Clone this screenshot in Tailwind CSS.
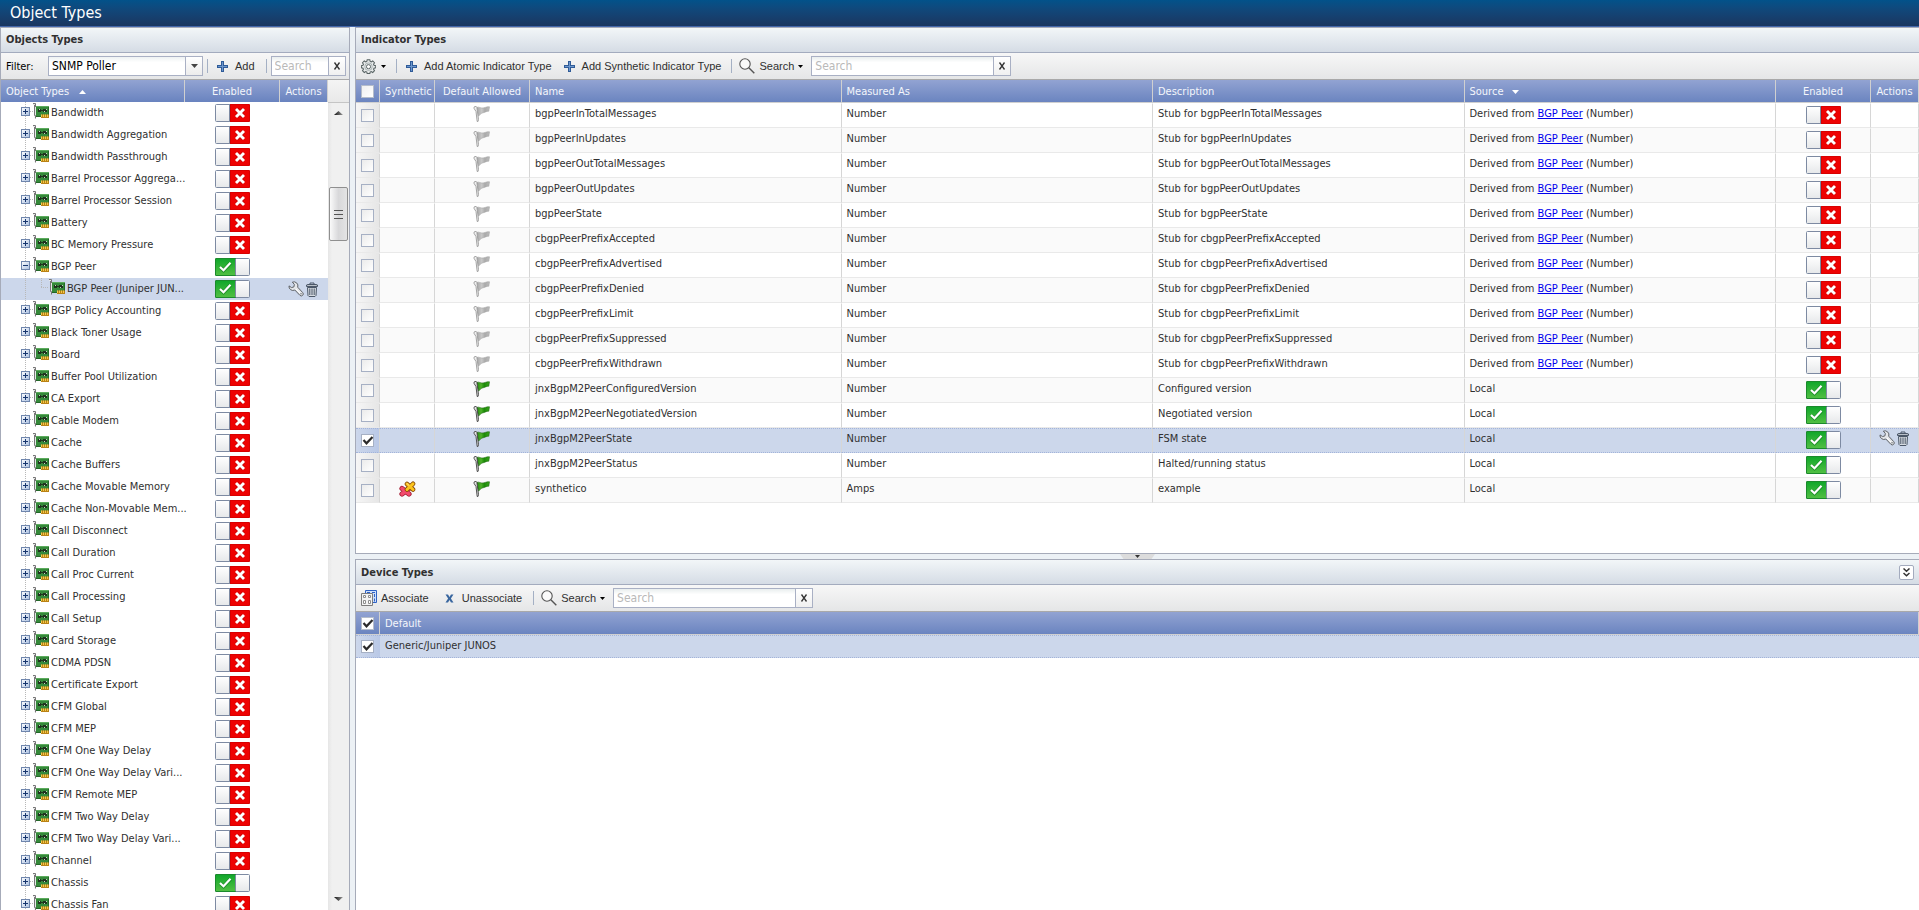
<!DOCTYPE html>
<html lang="en">
<head>
<meta charset="utf-8">
<title>Object Types</title>
<script src="https://cdn.jsdelivr.net/npm/@tailwindcss/browser@4"></script>
</head>
<body class="flex h-screen flex-col overflow-hidden bg-[#ecf1f5] font-['DejaVu_Sans_Condensed','DejaVu_Sans',sans-serif] text-[11px] leading-[13px] text-[#303030]">

<svg class="absolute size-0" aria-hidden="true">
  <defs>
    <linearGradient id="gGreen" x1="0" y1="0" x2="0" y2="1"><stop offset="0" stop-color="#0fa62a"/><stop offset="1" stop-color="#52c043"/></linearGradient>
    <linearGradient id="gKnob" x1="0" y1="0" x2="0" y2="1"><stop offset="0" stop-color="#ffffff"/><stop offset="1" stop-color="#e6e8ea"/></linearGradient>
    <linearGradient id="gExp" x1="0" y1="0" x2="1" y2="1"><stop offset="0" stop-color="#ffffff"/><stop offset="1" stop-color="#a9bfe0"/></linearGradient>
    <linearGradient id="gFlag" x1="0" y1="0" x2="1" y2="0"><stop offset="0" stop-color="#1d7d0a"/><stop offset=".35" stop-color="#4fb22a"/><stop offset=".6" stop-color="#1b8a08"/><stop offset="1" stop-color="#3aa51c"/></linearGradient>
    <linearGradient id="gFlagOff" x1="0" y1="0" x2="1" y2="0"><stop offset="0" stop-color="#a2a2a2"/><stop offset=".4" stop-color="#c8c8c8"/><stop offset=".65" stop-color="#aaaaaa"/><stop offset="1" stop-color="#bdbdbd"/></linearGradient>
    <linearGradient id="gArrow" x1="0" y1="0" x2="1" y2="0"><stop offset="0" stop-color="#111"/><stop offset="1" stop-color="#999"/></linearGradient>
  </defs>
  <symbol id="off" viewBox="0 0 35 18">
    <rect x=".5" y=".5" width="34" height="17" rx="1" fill="url(#gKnob)" stroke="#7d8aa2"/>
    <path d="M15 0H34a1 1 0 0 1 1 1V17a1 1 0 0 1-1 1H15z" fill="#d80000"/><rect x="16" y="1" width="18" height="16" fill="#ee0202"/>
    <path d="M14.500 1V17" stroke="#7d8aa2"/>
    <path d="M21.300 5.300l7.400 7.400m0-7.400l-7.400 7.400" stroke="#8f0000" stroke-width="4.200" opacity=".45"/>
    <path d="M21 5l8 8m0-8l-8 8" stroke="#fff" stroke-width="2.900"/>
  </symbol>
  <symbol id="on" viewBox="0 0 35 18">
    <rect x=".5" y=".5" width="34" height="17" rx="1" fill="url(#gKnob)" stroke="#7d8aa2"/>
    <path d="M1 .5H20.500V17.500H1a.5.5 0 0 1-.5-.5V1a.5.5 0 0 1 .5-.5z" fill="url(#gGreen)" stroke="#1b8a2c"/>
    <path d="M20.500 1V17" stroke="#7d8aa2"/>
    <path d="M5.500 9.500L8.500 12.500L15.500 5" fill="none" stroke="#0a6a1c" stroke-width="3.600" opacity=".55"/>
    <path d="M5 9L8.500 12.200L15.500 4.800" fill="none" stroke="#fff" stroke-width="2.200"/>
  </symbol>
  <symbol id="card" viewBox="0 0 16 16">
    <path d="M0 .5H3V15H1.500V2H0z" fill="#e8e8e8"/><path d="M0 .5H2.500V4M1.500 2V12.500h1V15.500" fill="none" stroke="#777"/>
    <path d="M3 3H16V13H3z" fill="#35893a"/><path d="M3 3.500H16" stroke="#5cab5c"/><path d="M15.500 4V13" stroke="#236827"/>
    <path d="M5 6h3v3H5zM10 6h4v3h-4z" fill="#20331f"/><path d="M8 7.500h2" stroke="#20331f"/>
    <path d="M6 6h1v1H6zM11 8h1v1h-1zM13 6h1v1h-1z" fill="#c3d6c0"/>
    <path d="M8 11.500H16V15H8z" fill="#b98216"/><path d="M8.500 11.500V14M10.500 11.500V14M12.500 11.500V14M14.500 11.500V14" stroke="#f2c84c"/>
    <path d="M3 13.500H8" stroke="#236827"/>
  </symbol>
  <symbol id="wrench" viewBox="0 0 16 16">
    <path d="M4.300 1.200a4 4 0 0 1 5.400 5l5 5.400a1.900 1.900 0 0 1-2.800 2.700L6.800 9A4 4 0 0 1 1 4.900L3.600 6.600 6 5.800 6.300 3.300z" fill="#e4e6e9" stroke="#5f6368" stroke-width="1"/>
    <path d="M8 8l4.800 5" stroke="#fff" stroke-width="1"/><circle cx="13" cy="12.800" r=".7" fill="#5f6368"/>
  </symbol>
  <symbol id="trash" viewBox="0 0 12 15">
    <path d="M4 2.500V1h4v1.500" fill="none" stroke="#4b5768"/>
    <path d="M.5 4.500V3L2 2.500h8L11.500 3V4.500z" fill="#b9c0c9" stroke="#4b5768"/>
    <path d="M1.500 5.500h9L10 13.500 9 14.500H3L2 13.500z" fill="#d6dbe1" stroke="#4b5768"/>
    <path d="M3.800 6.500V13M6 6.500V13M8.200 6.500V13" stroke="#4b5768"/>
  </symbol>
  <symbol id="flag" viewBox="0 0 17 16">
    <path d="M3.500 1.500C6 .2 8 2.800 11 1.800C13 1.200 14.500.6 16.500.8L15.800 5.200C13.500 5 12 6.500 10 6.800C8.200 7 7 8.500 5.600 10.200z" fill="url(#gFlag)" stroke="#1f6a10" stroke-width=".6"/>
    <path d="M1 2.300a1.500 1.500 0 0 1 2.900-.8L5.500 13.500 5 15.500H4.200L3 5.500z" fill="#e6e6e6" stroke="#3f3f3f" stroke-width=".9"/>
  </symbol>
  <symbol id="flagoff" viewBox="0 0 17 16">
    <path d="M3.500 1.500C6 .2 8 2.800 11 1.800C13 1.200 14.500.6 16.500.8L15.800 5.200C13.500 5 12 6.500 10 6.800C8.200 7 7 8.500 5.600 10.200z" fill="url(#gFlagOff)" stroke="#a6a6a6" stroke-width=".6"/>
    <path d="M1 2.300a1.500 1.500 0 0 1 2.900-.8L5.500 13.500 5 15.500H4.200L3 5.500z" fill="#f0f0f0" stroke="#9a9a9a" stroke-width=".9"/>
  </symbol>
  <symbol id="puzzle" viewBox="0 0 17 16">
    <g stroke-linecap="round">
      <path d="M3 7.500L10 13M10 7.500L3 13" stroke="#a3182f" stroke-width="5.200"/><path d="M3 7.500L10 13M10 7.500L3 13" stroke="#f24a6c" stroke-width="3.600"/>
      <path d="M8 3L14 8.500M14 2.800L8 8.500" stroke="#8a4d08" stroke-width="4.600"/><path d="M8 3L14 8.500M14 2.800L8 8.500" stroke="#fcc41c" stroke-width="3"/>
      <path d="M8 2.500L10 4.300" stroke="#ffe68a" stroke-width="1"/>
    </g>
  </symbol>
  <symbol id="plus" viewBox="0 0 11 11"><path d="M4 0h3v4h4v3H7v4H4V7H0V4h4z" fill="#2f5b98"/><path d="M5.500 1v9M1 5.500h9" stroke="#6d97cd"/></symbol>
  <symbol id="lens" viewBox="0 0 16 16"><circle cx="6" cy="6" r="5.200" fill="#fafafa" stroke="#555" stroke-width="1.100"/><path d="M9.800 9.800L15.300 15.300" stroke="#555" stroke-width="1.400"/></symbol>
  <symbol id="caret" viewBox="0 0 5 3"><path d="M0 0H5L2.500 3z" fill="#000"/></symbol>
  <symbol id="gear" viewBox="0 0 16 16">
    <path d="M6.600.8h2.800l.4 1.800 1.100.5 1.600-1 1.900 1.900-1 1.600.5 1.100 1.800.4v2.200l-1.800.5-.5 1.100 1 1.600-1.900 1.900-1.600-1-1.100.5-.4 1.700H6.600l-.4-1.700-1.100-.5-1.600 1-1.900-1.900 1-1.600-.5-1.100L.4 9.300V7.100l1.700-.4.5-1.100-1-1.600L3.500 2.100l1.600 1 1.100-.5z" fill="#e6e9e9" stroke="#566162" stroke-width="1.100"/>
    <circle cx="8" cy="8.200" r="4" fill="none" stroke="#98a4a5" stroke-width=".8"/><circle cx="8" cy="8.200" r="2.200" fill="#fff" stroke="#566162" stroke-width="1"/>
  </symbol>
  <symbol id="assoc" viewBox="0 0 16 16">
    <path d="M4.500.5H15.500V12.500H4.500z" fill="#cfe0fb" stroke="#2f62c4"/><path d="M6 2.500h3M11 2.500h3M13.500 4v3M13.500 8.500v3" stroke="#2f62c4"/>
    <path d="M.5 3.500H11.500V15.500H.5z" fill="#f3f3f3" stroke="#7d7d7d"/>
    <path d="M2.500 5.500h2v2h-2zM7.500 5.500h2v2h-2zM2.500 10.500h2v3h-2zM7.500 10.500h2v3h-2z" fill="#fff" stroke="#8d8d8d"/>
  </symbol>
  <symbol id="tick" viewBox="0 0 13 13"><path d="M2.500 6L5.500 9.300L11.500 3" fill="none" stroke="#2a2a2a" stroke-width="2.200"/></symbol>
  <symbol id="clear" viewBox="0 0 8 8"><path d="M1.500.5l5 7M6.500.5l-5 7" stroke="#333" stroke-width="1.300"/></symbol>
</svg>

<header class="flex h-[27px] shrink-0 items-center border-b border-[#4367ab] bg-linear-to-b from-[#02528a] to-[#193660] pl-2.5">
  <h1 class="text-[16px] leading-[20px] text-white">Object Types</h1>
</header>

<main class="flex min-h-0 flex-1 gap-[5px]">

  <!-- Object type tree -->
  <section class="flex w-[350px] shrink-0 flex-col border-x border-t border-[#a6abb9] bg-white" aria-label="Objects Types">
    <h2 class="h-[25px] shrink-0 border-b border-[#a3abbe] bg-linear-to-b from-[#f2f6f8] to-[#d5dce5] pl-[5px] leading-6 font-bold">Objects Types</h2>
    <div class="flex h-[27px] shrink-0 items-center border-b border-[#a9a9a9] bg-linear-to-b from-[#f7f7f7] to-[#e5e6e7] pl-[5px] text-black">
      <label for="filter" class="w-[42px]">Filter:</label>
      <div class="relative h-5 w-[155px]">
        <select id="filter" class="h-5 w-full appearance-none border border-[#a9b0c4] bg-linear-to-b from-[#eef2f3] to-white to-30% pl-[3px] text-[12px] leading-[18px] text-black"><option>SNMP Poller</option></select>
        <span class="pointer-events-none absolute inset-y-0 right-0 flex w-[18px] items-center justify-center border border-[#a9b0c4] bg-linear-to-b from-white to-[#ececec]"><svg class="h-1 w-[7px]" viewBox="0 0 7 4"><path d="M0 0H7L3.500 4z" fill="#444"/></svg></span>
      </div>
      <span class="ml-1 h-3.5 w-px bg-[#a4b0c4]"></span>
      <button class="ml-[9px] flex items-center gap-[7px] font-['Liberation_Sans',sans-serif] text-[#303030]"><svg class="size-[11px]"><use href="#plus"/></svg>Add</button>
      <span class="ml-[11px] h-3.5 w-px bg-[#a4b0c4]"></span>
      <div class="ml-1 flex h-5">
        <input aria-label="Search object types" placeholder="Search" class="h-5 w-[58px] border border-[#a9b0c4] bg-linear-to-b from-[#e9eeee] to-white to-30% px-[3px] text-[12px] placeholder:text-[#b9b9b9]">
        <button aria-label="Clear search" class="-ml-px flex h-5 w-[18px] items-center justify-center border border-[#a9b0c4] bg-linear-to-b from-white to-[#f0f0f0]"><svg class="size-2"><use href="#clear"/></svg></button>
      </div>
    </div>
    <div class="flex min-h-0 flex-1">
      <div class="min-w-0 flex-1 overflow-hidden">
        <table class="w-full table-fixed border-separate border-spacing-0">
          <thead>
            <tr class="bg-linear-to-b from-[#92a3d2] to-[#6983bf] text-[#f4f6fb]">
              <th class="h-[22px] w-[184px] border-r border-[#d0d0d0] pl-[5px] text-left font-normal"><span class="flex items-center gap-2.5">Object Types<svg class="mt-0.5 h-1 w-[7px]" viewBox="0 0 7 4"><path d="M0 4H7L3.500 0z" fill="#fff"/></svg></span></th>
              <th class="w-[95px] border-r border-[#d0d0d0] text-center font-normal">Enabled</th>
              <th class="border-r border-[#d0d0d0] text-center font-normal">Actions</th>
            </tr>
          </thead>
          <tbody id="tree"></tbody>
        </table>
      </div>
      <div class="flex w-[21px] shrink-0 flex-col">
        <div class="h-[23px] shrink-0 border-b border-[#c5c5c5] bg-linear-to-b from-[#f4f4f4] to-[#e9e9e9]"></div>
        <div class="flex flex-1 flex-col items-center bg-linear-to-r from-[#e6e6e6] to-[#f0f0f0] to-20%">
          <svg class="mt-2 h-1 w-[9px] shrink-0" viewBox="0 0 9 4"><path d="M0 4H9L4.500 0z" fill="url(#gArrow)"/></svg>
          <div class="mt-[72px] flex h-[54px] w-[19px] shrink-0 flex-col items-center justify-center gap-[3px] rounded-xs border border-[#8f8f8f] bg-linear-to-r from-[#fafafa] via-[#d8d8da] to-[#e4e4e4]">
            <i class="h-px w-[9px] bg-[#555]"></i><i class="h-px w-[9px] bg-[#555]"></i><i class="h-px w-[9px] bg-[#555]"></i>
          </div>
          <svg class="mt-auto mb-[9px] h-1 w-[9px] shrink-0" viewBox="0 0 9 4"><path d="M0 0H9L4.500 4z" fill="url(#gArrow)"/></svg>
        </div>
      </div>
    </div>
  </section>

  <div class="flex min-w-0 flex-1 flex-col">

    <!-- Indicator grid -->
    <section class="flex min-h-0 flex-[527_527_0%] flex-col border-y border-l border-[#a6abb9] bg-white" aria-label="Indicator Types">
      <h2 class="h-[25px] shrink-0 border-b border-[#a3abbe] bg-linear-to-b from-[#f2f6f8] to-[#d5dce5] pl-[5px] leading-6 font-bold">Indicator Types</h2>
      <div class="flex h-[27px] shrink-0 items-center border-b border-[#a9a9a9] bg-linear-to-b from-[#f7f7f7] to-[#e5e6e7] pl-[5px] font-['Liberation_Sans',sans-serif]">
        <button aria-label="Settings" class="flex items-center gap-[5px]"><svg class="size-[15px]"><use href="#gear"/></svg><svg class="h-[3px] w-[5px]"><use href="#caret"/></svg></button>
        <span class="ml-2.5 h-3.5 w-px bg-[#a4b0c4]"></span>
        <button class="ml-[9px] flex items-center gap-[7px]"><svg class="size-[11px]"><use href="#plus"/></svg>Add Atomic Indicator Type</button>
        <button class="ml-3 flex items-center gap-[7px]"><svg class="size-[11px]"><use href="#plus"/></svg>Add Synthetic Indicator Type</button>
        <span class="ml-2.5 h-3.5 w-px bg-[#a4b0c4]"></span>
        <button class="ml-[7px] flex items-center gap-1"><svg class="size-4"><use href="#lens"/></svg>Search<svg class="h-[3px] w-[5px]"><use href="#caret"/></svg></button>
        <div class="ml-2 flex h-5">
          <input aria-label="Search indicator types" placeholder="Search" class="h-5 w-[183px] border border-[#a9b0c4] bg-linear-to-b from-[#e9eeee] to-white to-30% px-[3px] font-['DejaVu_Sans_Condensed','DejaVu_Sans',sans-serif] text-[12px] placeholder:text-[#b9b9b9]">
          <button aria-label="Clear search" class="-ml-px flex h-5 w-[18px] items-center justify-center border border-[#a9b0c4] bg-linear-to-b from-white to-[#f0f0f0]"><svg class="size-2"><use href="#clear"/></svg></button>
        </div>
      </div>
      <div class="min-h-0 flex-1 overflow-hidden">
        <table class="w-full table-fixed border-separate border-spacing-0">
          <thead>
            <tr class="bg-linear-to-b from-[#92a3d2] to-[#6983bf] text-left text-[#f4f6fb] *:border-r *:border-b *:border-[#d0d0d0] *:font-normal">
              <th class="h-[23px] w-6 pl-[5px]"><input type="checkbox" aria-label="Select all indicators" class="block size-[13px] appearance-none border border-[#b5bdcb] bg-linear-to-br from-[#f0f0f0] to-white"></th>
              <th class="w-[55px] pl-[5px]">Synthetic</th>
              <th class="w-[95px] text-center">Default Allowed</th>
              <th class="pl-[5px]">Name</th>
              <th class="pl-[5px]">Measured As</th>
              <th class="pl-[5px]">Description</th>
              <th class="pl-[5px]"><span class="flex items-center gap-[9px]">Source<svg class="mt-0.5 h-1 w-[7px]" viewBox="0 0 7 4"><path d="M0 0H7L3.500 4z" fill="#fff"/></svg></span></th>
              <th class="w-[95px] text-center">Enabled</th>
              <th class="w-12 text-center">Actions</th>
            </tr>
          </thead>
          <tbody id="indicators"></tbody>
        </table>
      </div>
    </section>

    <div class="flex h-[5px] shrink-0 justify-center">
      <button aria-label="Collapse device types" class="h-[5px] w-[35px]"><svg class="block h-[5px] w-[35px]" viewBox="0 0 35 5"><path d="M0 0H35L31.500 5H3.500z" fill="#dcdcdc"/><path d="M15 1H20L17.500 4z" fill="#333"/></svg></button>
    </div>

    <!-- Device grid -->
    <section class="flex min-h-0 flex-[351_351_0%] flex-col border-t border-l border-[#a6abb9] bg-white" aria-label="Device Types">
      <div class="flex h-[25px] shrink-0 items-center justify-between border-b border-[#a3abbe] bg-linear-to-b from-[#f2f6f8] to-[#d5dce5] px-[5px]">
        <h2 class="font-bold">Device Types</h2>
        <button aria-label="Collapse panel" class="flex size-[15px] items-center justify-center rounded-xs border border-[#a3abbe] bg-white"><svg class="h-[9px] w-[7px]" viewBox="0 0 7 9"><path d="M.5.5L3.500 3.300L6.500.5M.5 5L3.500 7.800L6.500 5" fill="none" stroke="#333" stroke-width="1.500"/></svg></button>
      </div>
      <div class="flex h-[27px] shrink-0 items-center border-b border-[#a9a9a9] bg-linear-to-b from-[#f7f7f7] to-[#e5e6e7] pl-[5px] font-['Liberation_Sans',sans-serif]">
        <button class="flex items-center gap-1"><svg class="size-4"><use href="#assoc"/></svg>Associate</button>
        <button class="ml-4 flex items-center gap-2"><svg class="size-[9px]" viewBox="0 0 9 9"><path d="M.5.5h2.500l1.500 2.500L6 .5h2.500L5.900 4.500 8.500 8.500H6L4.500 6 3 8.500H.5L3.100 4.500z" fill="#3a679f"/></svg>Unassociate</button>
        <span class="ml-[11px] h-3.5 w-px bg-[#a4b0c4]"></span>
        <button class="ml-[7px] flex items-center gap-1"><svg class="size-4"><use href="#lens"/></svg>Search<svg class="h-[3px] w-[5px]"><use href="#caret"/></svg></button>
        <div class="ml-2 flex h-5">
          <input aria-label="Search device types" placeholder="Search" class="h-5 w-[183px] border border-[#a9b0c4] bg-linear-to-b from-[#e9eeee] to-white to-30% px-[3px] font-['DejaVu_Sans_Condensed','DejaVu_Sans',sans-serif] text-[12px] placeholder:text-[#b9b9b9]">
          <button aria-label="Clear search" class="-ml-px flex h-5 w-[18px] items-center justify-center border border-[#a9b0c4] bg-linear-to-b from-white to-[#f0f0f0]"><svg class="size-2"><use href="#clear"/></svg></button>
        </div>
      </div>
      <table class="w-full table-fixed border-separate border-spacing-0">
        <thead>
          <tr class="bg-linear-to-b from-[#92a3d2] to-[#6983bf] text-left text-[#f4f6fb] *:border-r *:border-b *:border-[#d0d0d0] *:font-normal">
            <th class="h-[23px] w-6 pl-[5px]"><span class="relative block size-[13px]"><input type="checkbox" checked aria-label="Select all device types" class="block size-[13px] appearance-none border border-[#b5bdcb] bg-white"><svg class="pointer-events-none absolute inset-0 size-[13px]"><use href="#tick"/></svg></span></th>
            <th class="pl-[5px]">Default</th>
          </tr>
        </thead>
        <tbody>
          <tr class="bg-[#ccd7eb] *:border-y *:border-dotted *:border-[#a3b4da]">
            <td class="h-[23px] bg-linear-to-r from-[#ccd7eb] to-[#b9c8e6] pl-[5px]"><span class="relative block size-[13px]"><input type="checkbox" checked aria-label="Select Generic/Juniper JUNOS" class="block size-[13px] appearance-none border border-[#a6b0c4] bg-white"><svg class="pointer-events-none absolute inset-0 size-[13px]"><use href="#tick"/></svg></span></td>
            <td class="pb-0.5 pl-[5px]">Generic/Juniper JUNOS</td>
          </tr>
        </tbody>
      </table>
    </section>
  </div>
</main>

<script>
const sw = (on, name) => `<button role="switch" aria-checked="${on}" aria-label="Enable ${name}" class="mx-auto block h-[18px] w-[35px]"><svg class="block h-[18px] w-[35px]"><use href="#${on ? 'on' : 'off'}"/></svg></button>`;
const actions = name => `<div class="flex items-center justify-center gap-0.5 pr-0.5"><button aria-label="Edit ${name}"><svg class="block size-4"><use href="#wrench"/></svg></button><button aria-label="Delete ${name}"><svg class="block h-[15px] w-[12px]"><use href="#trash"/></svg></button></div>`;

const types = ["Bandwidth","Bandwidth Aggregation","Bandwidth Passthrough","Barrel Processor Aggrega...","Barrel Processor Session","Battery","BC Memory Pressure","BGP Peer","BGP Peer (Juniper JUN...","BGP Policy Accounting","Black Toner Usage","Board","Buffer Pool Utilization","CA Export","Cable Modem","Cache","Cache Buffers","Cache Movable Memory","Cache Non-Movable Mem...","Call Disconnect","Call Duration","Call Proc Current","Call Processing","Call Setup","Card Storage","CDMA PDSN","Certificate Export","CFM Global","CFM MEP","CFM One Way Delay","CFM One Way Delay Vari...","CFM Remote MEP","CFM Two Way Delay","CFM Two Way Delay Vari...","Channel","Chassis","Chassis Fan"];
const enabledTypes = new Set([7, 8, 35]);
const treeNode = open => `<svg class="h-[22px] w-8 shrink-0" viewBox="0 0 32 22" shape-rendering="crispEdges"><path d="M24.500 0V22M29 9.500H32" stroke="#b8b8b8" stroke-dasharray="1 1"/><rect x="20.500" y="5.500" width="8" height="8" fill="url(#gExp)" stroke="#6f86ad"/><path d="M22 9.500H27${open ? '' : 'M24.500 7V12'}" stroke="#16356e"/></svg>`;
const treeLeaf = `<svg class="h-[22px] w-12 shrink-0" viewBox="0 0 48 22" shape-rendering="crispEdges"><path d="M24.500 0V22M40.500 0V10M40 9.500H48" fill="none" stroke="#b8b8b8" stroke-dasharray="1 1"/></svg>`;
document.getElementById('tree').innerHTML = types.map((t, i) => {
  const sel = i === 8;
  return `<tr class="${sel ? 'bg-[#ccd7eb]' : ''}">
    <td class="h-[22px] p-0"><div class="flex h-[22px] items-center whitespace-nowrap">${sel ? treeLeaf : treeNode(i === 7)}<svg class="mb-[5px] size-4 shrink-0"><use href="#card"/></svg><span class="ml-0.5 pb-0.5">${t}</span></div></td>
    <td class="p-0">${sw(enabledTypes.has(i), t)}</td>
    <td class="p-0">${sel ? actions(t) : ''}</td></tr>`;
}).join('');

const stubs = ["bgpPeerInTotalMessages","bgpPeerInUpdates","bgpPeerOutTotalMessages","bgpPeerOutUpdates","bgpPeerState","cbgpPeerPrefixAccepted","cbgpPeerPrefixAdvertised","cbgpPeerPrefixDenied","cbgpPeerPrefixLimit","cbgpPeerPrefixSuppressed","cbgpPeerPrefixWithdrawn"];
const rows = stubs.map(n => ({n, m: 'Number', d: 'Stub for ' + n, local: false})).concat([
  {n: 'jnxBgpM2PeerConfiguredVersion', m: 'Number', d: 'Configured version', local: true},
  {n: 'jnxBgpM2PeerNegotiatedVersion', m: 'Number', d: 'Negotiated version', local: true},
  {n: 'jnxBgpM2PeerState', m: 'Number', d: 'FSM state', local: true, sel: true},
  {n: 'jnxBgpM2PeerStatus', m: 'Number', d: 'Halted/running status', local: true},
  {n: 'synthetico', m: 'Amps', d: 'example', local: true, syn: true}]);
document.getElementById('indicators').innerHTML = rows.map((r, i) => `
  <tr class="align-top *:border-r *:border-b *:border-r-[#d6d6d6] ${r.sel ? 'bg-[#ccd7eb] *:border-t *:border-y-[#a3b4da] *:[border-top-style:dotted] *:[border-bottom-style:dotted]' : (i % 2 ? 'bg-[#fafafa] *:border-b-[#e9e9e9] *:border-t *:border-t-transparent' : 'bg-white *:border-b-[#e9e9e9] *:border-t *:border-t-transparent')}">
    <td class="h-[25px] bg-linear-to-r pt-[5px] pl-[5px] ${r.sel ? 'from-[#ccd7eb] to-[#b9c8e6]' : 'from-[#f6f6f6] to-[#e6e6e6]'}"><span class="relative block size-[13px]"><input type="checkbox" aria-label="Select ${r.n}" ${r.sel ? 'checked' : ''} class="block size-[13px] appearance-none border border-[#a6b0c4] ${r.sel ? 'bg-white' : 'bg-linear-to-br from-[#ebebeb] to-white'}">${r.sel ? '<svg class="pointer-events-none absolute inset-0 size-[13px]"><use href="#tick"/></svg>' : ''}</span></td>
    <td class="pt-[2px]">${r.syn ? '<svg class="mx-auto block h-4 w-[17px]"><use href="#puzzle"/></svg>' : ''}</td>
    <td class="pt-[2px] pr-0.5"><svg class="mx-auto block h-4 w-[17px]"><use href="#${r.local ? 'flag' : 'flagoff'}"/></svg></td>
    <td class="pt-[3px] pl-[5px]">${r.n}</td>
    <td class="pt-[3px] pl-[5px]">${r.m}</td>
    <td class="pt-[3px] pl-[5px]">${r.d}</td>
    <td class="pt-[3px] pl-[5px]">${r.local ? 'Local' : 'Derived from <a href="#" class="text-[#0000ee] underline">BGP Peer</a> (Number)'}</td>
    <td class="pt-[2px]">${sw(r.local, r.n)}</td>
    <td class="pt-px">${r.sel ? actions(r.n) : ''}</td>
  </tr>`).join('');
</script>
</body>
</html>
